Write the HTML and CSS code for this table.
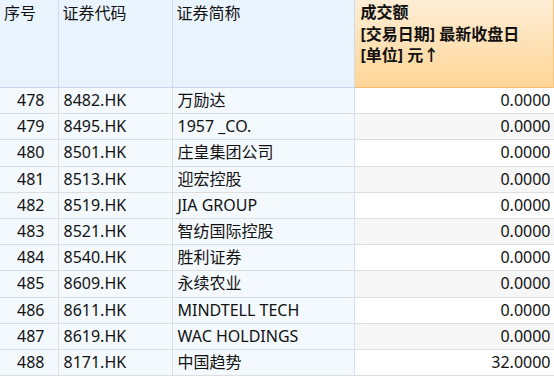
FILE: index.html
```html
<!DOCTYPE html>
<html lang="zh-CN">
<head>
    <meta charset="UTF-8">
    <meta name="viewport" content="width=device-width, initial-scale=1.0">
    <title>成交额</title>
    <link rel="stylesheet" href="styles.css">
</head>
<body>
    <table class="grid">
        <colgroup>
            <col class="col-no">
            <col class="col-code">
            <col class="col-name">
            <col class="col-amount">
        </colgroup>
        <thead>
            <tr>
                <th>序号</th>
                <th>证券代码</th>
                <th>证券简称</th>
                <th class="sorted">
                    <div>成交额</div>
                    <div>[交易日期] 最新收盘日</div>
                    <div>[单位] 元↑</div>
                </th>
            </tr>
        </thead>
        <tbody>
            <tr><td class="no">478</td><td>8482.HK</td><td>万励达</td><td class="num">0.0000</td></tr>
            <tr><td class="no">479</td><td>8495.HK</td><td>1957 _CO.</td><td class="num">0.0000</td></tr>
            <tr><td class="no">480</td><td>8501.HK</td><td>庄皇集团公司</td><td class="num">0.0000</td></tr>
            <tr><td class="no">481</td><td>8513.HK</td><td>迎宏控股</td><td class="num">0.0000</td></tr>
            <tr><td class="no">482</td><td>8519.HK</td><td>JIA GROUP</td><td class="num">0.0000</td></tr>
            <tr><td class="no">483</td><td>8521.HK</td><td>智纺国际控股</td><td class="num">0.0000</td></tr>
            <tr><td class="no">484</td><td>8540.HK</td><td>胜利证券</td><td class="num">0.0000</td></tr>
            <tr><td class="no">485</td><td>8609.HK</td><td>永续农业</td><td class="num">0.0000</td></tr>
            <tr><td class="no">486</td><td>8611.HK</td><td>MINDTELL TECH</td><td class="num">0.0000</td></tr>
            <tr><td class="no">487</td><td>8619.HK</td><td>WAC HOLDINGS</td><td class="num">0.0000</td></tr>
            <tr><td class="no">488</td><td>8171.HK</td><td>中国趋势</td><td class="num">32.0000</td></tr>
        </tbody>
    </table>
</body>
</html>
```

FILE: styles.css
```css
/* Data grid */
body {
    margin: 0;
    background-color: #ffffff;
    font-family: "Noto Sans", "Noto Sans CJK SC", sans-serif;
    font-size: 16px;
    color: #111111;
}
.grid {
    width: 554px;
    table-layout: fixed;
    border-collapse: collapse;
}
.col-no {
    width: 58px;
}
.col-code {
    width: 114px;
}
.col-name {
    width: 182px;
}
.col-amount {
    width: 200px;
}
th {
    height: 86px;
    padding: 1px 4px 0 4px;
    vertical-align: top;
    text-align: left;
    font-weight: normal;
    line-height: 24px;
    background-color: #eaf4fe;
    border-right: 1px solid #cadcee;
    border-bottom: 1px solid #c3d8ee;
}
th.sorted {
    padding: 0 6px;
    font-weight: bold;
    line-height: 21.5px;
    background: linear-gradient(#fdedd5, #ffd596);
    border-right: 2px solid #f8c27c;
    border-bottom: 1px solid #f6b86a;
}
th.sorted div:first-child {
    margin-top: 2px;
}
td {
    height: 25.2px;
    padding: 0 5px;
    line-height: 25px;
    white-space: nowrap;
    background-color: #f4f9fd;
    border-right: 1px solid #dcdfe2;
    border-bottom: 1px solid #dedede;
}
td.no {
    text-align: right;
    padding-right: 13px;
}
td.num {
    text-align: right;
    padding-right: 3px;
    background-color: #ffffff;
}
tbody tr:nth-child(even) td.num {
    background-color: #f7f7f7;
}
```
